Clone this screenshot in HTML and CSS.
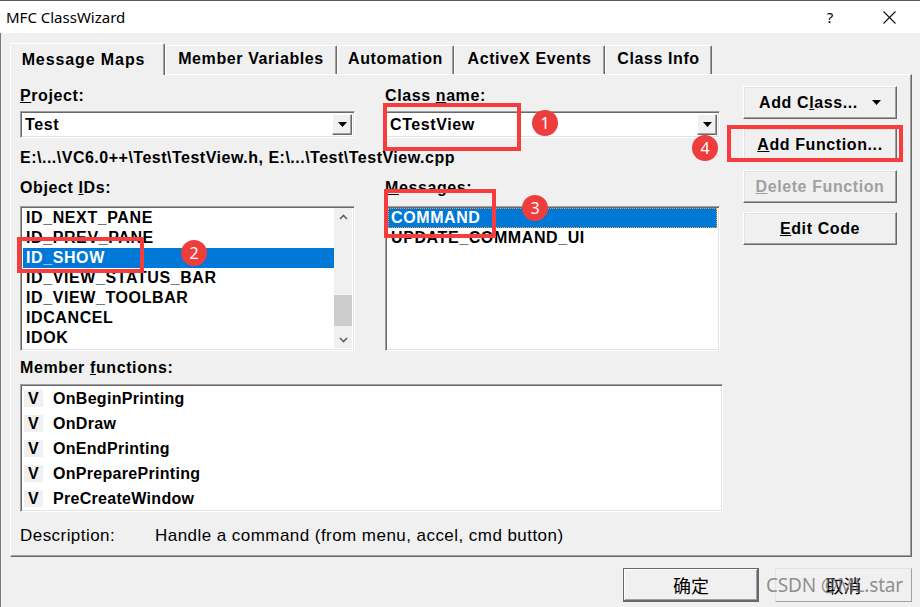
FILE: index.html
```html
<!DOCTYPE html>
<html lang="en">
<head>
    <meta charset="UTF-8">
    <title>MFC ClassWizard</title>
    <link rel="stylesheet" href="styles.css">
</head>
<body>
<div class="window">
    <div class="titlebar">
        <span class="title">MFC ClassWizard</span>
        <span class="tb-btn help">?</span>
        <span class="tb-btn close">
            <svg width="13" height="13" viewBox="0 0 13 13"><path d="M0.5 0.5 L12.5 12.5 M12.5 0.5 L0.5 12.5" stroke="#111" stroke-width="1.1" fill="none"/></svg>
        </span>
    </div>

    <div class="client">
        <div class="tabs">
            <div class="tab active tab-mm">Message Maps</div>
            <div class="tab tab-mv">Member Variables</div>
            <div class="tab tab-au">Automation</div>
            <div class="tab tab-ax">ActiveX Events</div>
            <div class="tab tab-ci">Class Info</div>
        </div>

        <div class="panel">
            <div class="main">
                <div class="pair">
                    <div class="field">
                        <div class="lbl"><u>P</u>roject:</div>
                        <div class="combo sunken">
                            <span class="combo-text">Test</span>
                            <span class="drop"><svg width="9" height="5" viewBox="0 0 9 5"><path d="M0 0 H9 L4.5 5 Z" fill="#000"/></svg></span>
                        </div>
                    </div>
                    <div class="field">
                        <div class="lbl">Class <u>n</u>ame:</div>
                        <div class="combo sunken">
                            <span class="combo-text">CTestView</span>
                            <span class="drop"><svg width="9" height="5" viewBox="0 0 9 5"><path d="M0 0 H9 L4.5 5 Z" fill="#000"/></svg></span>
                        </div>
                    </div>
                </div>

                <div class="path">E:\...\VC6.0++\Test\TestView.h, E:\...\Test\TestView.cpp</div>

                <div class="pair lists">
                    <div class="field">
                        <div class="lbl">Object <u>I</u>Ds:</div>
                        <div class="listbox sunken">
                            <div class="items">
                                <div class="item">ID_NEXT_PANE</div>
                                <div class="item">ID_PREV_PANE</div>
                                <div class="item selected">ID_SHOW</div>
                                <div class="item">ID_VIEW_STATUS_BAR</div>
                                <div class="item">ID_VIEW_TOOLBAR</div>
                                <div class="item">IDCANCEL</div>
                                <div class="item">IDOK</div>
                            </div>
                            <div class="scrollbar">
                                <span class="arrow"><svg width="9" height="6" viewBox="0 0 9 6"><path d="M1 5 L4.5 1.5 L8 5" stroke="#606060" stroke-width="1.6" fill="none"/></svg></span>
                                <span class="track"><span class="thumb"></span></span>
                                <span class="arrow"><svg width="9" height="6" viewBox="0 0 9 6"><path d="M1 1 L4.5 4.5 L8 1" stroke="#606060" stroke-width="1.6" fill="none"/></svg></span>
                            </div>
                        </div>
                    </div>
                    <div class="field">
                        <div class="lbl"><u>M</u>essages:</div>
                        <div class="listbox sunken">
                            <div class="items">
                                <div class="item selected focus">COMMAND</div>
                                <div class="item">UPDATE_COMMAND_UI</div>
                            </div>
                        </div>
                    </div>
                </div>

                <div class="lbl members-lbl">Member <u>f</u>unctions:</div>
                <div class="members sunken">
                    <div class="member"><span class="kind">V</span>OnBeginPrinting</div>
                    <div class="member"><span class="kind">V</span>OnDraw</div>
                    <div class="member"><span class="kind">V</span>OnEndPrinting</div>
                    <div class="member"><span class="kind">V</span>OnPreparePrinting</div>
                    <div class="member"><span class="kind">V</span>PreCreateWindow</div>
                </div>

                <div class="desc">
                    <span class="desc-lbl">Description:</span>
                    <span>Handle a command (from menu, accel, cmd button)</span>
                </div>
            </div>

            <div class="side">
                <div class="btn">Add C<u>l</u>ass...<svg class="caret" width="9" height="5" viewBox="0 0 9 5"><path d="M0 0 H9 L4.5 5 Z" fill="#000"/></svg></div>
                <div class="btn"><u>A</u>dd Function...</div>
                <div class="btn disabled"><u>D</u>elete Function</div>
                <div class="btn"><u>E</u>dit Code</div>
            </div>
        </div>

        <div class="footer">
            <div class="btn cjk default">确定</div>
            <div class="btn cjk plain">取消</div>
        </div>
    </div>

    <div class="mark box box-1"></div>
    <div class="mark box box-2"></div>
    <div class="mark box box-3"></div>
    <div class="mark box box-4"></div>
    <div class="mark badge badge-1">1</div>
    <div class="mark badge badge-2">2</div>
    <div class="mark badge badge-3">3</div>
    <div class="mark badge badge-4">4</div>
    <div class="watermark">CSDN @ML.star</div>
</div>
</body>
</html>
```

FILE: styles.css
```css
body {
    margin: 0;
    overflow: hidden;
    background: #f0f0f0;
}
.window {
    position: relative;
    width: 920px;
    height: 607px;
    display: flex;
    flex-direction: column;
    font-family: "Liberation Sans", Arial, sans-serif;
    color: #000;
}
.titlebar {
    height: 32px;
    border-top: 1px solid #5a5a5a;
    background: #fff;
    display: flex;
    align-items: center;
    padding-right: 8px;
}
.title {
    font-family: "Noto Sans", "Open Sans", sans-serif;
    font-size: 15px;
    margin-left: 6px;
}
.tb-btn {
    width: 46px;
    display: flex;
    justify-content: center;
    align-items: center;
}
.help {
    margin-left: auto;
    margin-right: 13px;
    font-family: "Noto Sans", sans-serif;
    font-size: 15px;
}
.close svg {
    display: block;
    margin-top: 1px;
}
.client {
    flex: 1;
    background: #f0f0f0;
    border-left: 1px solid #7a7a7a;
    padding: 9px 8px 0 9px;
}

/* tabs */
.tabs {
    display: flex;
    align-items: flex-end;
    height: 32px;
    position: relative;
    z-index: 2;
}
.tab {
    height: 29px;
    box-sizing: border-box;
    font-weight: bold;
    font-size: 16px;
    letter-spacing: 0.6px;
    display: flex;
    justify-content: center;
    align-items: center;
    padding-bottom: 2px;
    border-top: 1px solid #fff;
    border-left: 1px solid #fff;
    border-right: 1px solid #696969;
    box-shadow: inset -1px 0 #a0a0a0;
    border-top-left-radius: 2px;
    border-top-right-radius: 2px;
    background: #f0f0f0;
}
.tab.active {
    height: 32px;
    padding-bottom: 0;
    margin-bottom: -1px;
    padding-top: 1px;
    padding-right: 8px;
    letter-spacing: 0.9px;
}
.tab-mm { width: 155px; }
.tab-mv { width: 172px; }
.tab-au { width: 117px; }
.tab-ax { width: 151px; }
.tab-ci { width: 107px; }

.panel {
    height: 483px;
    box-sizing: border-box;
    border: 1px solid;
    border-color: #fff #696969 #696969 #fff;
    box-shadow: inset -1px -1px #a0a0a0;
    padding: 11px 14px 0 9px;
    display: flex;
    gap: 20px;
}
.main {
    width: 703px;
}
.pair {
    display: grid;
    grid-template-columns: 335px 335px;
    column-gap: 30px;
}
.lbl {
    height: 20px;
    line-height: 20px;
    font-size: 16px;
    font-weight: bold;
    letter-spacing: 0.6px;
}
.sunken {
    box-sizing: border-box;
    border: 1px solid;
    border-color: #a0a0a0 #fff #fff #a0a0a0;
    box-shadow: inset 1px 1px #696969, inset -1px -1px #e3e3e3;
    background: #fff;
}
.combo {
    margin-top: 5px;
    height: 27px;
    display: flex;
    align-items: center;
    padding: 2px 2px 2px 4px;
}
.combo-text {
    flex: 1;
    font-size: 16px;
    font-weight: bold;
    letter-spacing: 0.6px;
}
.drop {
    width: 20px;
    height: 21px;
    box-sizing: border-box;
    background: #f0f0f0;
    border: 1px solid;
    border-color: #fff #696969 #696969 #fff;
    box-shadow: inset -1px -1px #a0a0a0;
    display: flex;
    justify-content: center;
    align-items: center;
}
.path {
    margin-top: 10px;
    height: 20px;
    line-height: 20px;
    font-size: 16px;
    font-weight: bold;
    letter-spacing: 0.5px;
    white-space: nowrap;
}
.lists {
    margin-top: 10px;
}
.listbox {
    margin-top: 8px;
    height: 145px;
    padding: 1px 2px 2px;
    display: flex;
}
.items {
    flex: 1;
}
.item {
    height: 20px;
    line-height: 20px;
    padding-left: 3px;
    font-size: 16px;
    font-weight: bold;
    letter-spacing: 0.6px;
    white-space: nowrap;
    box-sizing: border-box;
}
.item.selected {
    background: #0078d7;
    color: #fff;
}
.item.focus {
    border: 1px dotted #f0a040;
    line-height: 18px;
    padding-left: 2px;
}
.scrollbar {
    width: 18px;
    display: flex;
    flex-direction: column;
    background: #f0f0f0;
}
.arrow {
    height: 17px;
    display: flex;
    justify-content: center;
    align-items: center;
}
.track {
    flex: 1;
    display: flex;
    flex-direction: column;
    justify-content: flex-end;
    padding-bottom: 5px;
}
.thumb {
    display: block;
    height: 31px;
    background: #cdcdcd;
}
.members-lbl {
    margin-top: 7px;
}
.members {
    margin-top: 6px;
    height: 128px;
    padding: 1px 3px;
}
.member {
    height: 25px;
    display: flex;
    align-items: center;
    font-size: 16px;
    font-weight: bold;
    letter-spacing: 0.3px;
}
.kind {
    width: 19px;
    height: 17px;
    line-height: 17px;
    text-align: center;
    background: #f0f0f0;
    margin-right: 10px;
}
.desc {
    margin-top: 14px;
    height: 20px;
    line-height: 20px;
    font-size: 17px;
    letter-spacing: 0.45px;
    display: flex;
}
.desc-lbl {
    width: 135px;
}

/* buttons */
.side {
    width: 154px;
    display: flex;
    flex-direction: column;
    gap: 9px;
}
.btn {
    height: 33px;
    box-sizing: border-box;
    border: 1px solid;
    border-color: #fff #696969 #696969 #fff;
    box-shadow: inset -1px -1px #a0a0a0, inset 1px 1px #e3e3e3;
    background: #f0f0f0;
    display: flex;
    justify-content: center;
    align-items: center;
    font-size: 16px;
    font-weight: bold;
    letter-spacing: 0.6px;
}
.btn.disabled {
    color: #a0a0a0;
}
.caret {
    margin-left: 14px;
}
.footer {
    display: flex;
    justify-content: flex-end;
    gap: 16px;
    margin-top: 11px;
}
.btn.cjk {
    width: 136px;
    height: 34px;
    font-family: "Noto Sans CJK SC", sans-serif;
    font-weight: normal;
    font-size: 18px;
    letter-spacing: 0;
}
.btn.default {
    border-color: #696969;
    box-shadow: inset -1px -1px #696969, inset 1px 1px #fff, inset -2px -2px #a0a0a0;
}
.btn.plain {
    width: 137px;
    border-color: #e3e3e3 #a0a0a0 #a0a0a0 #e3e3e3;
    box-shadow: none;
}

/* annotations */
.mark {
    position: absolute;
    box-sizing: border-box;
}
.box {
    border: 4px solid #f63c3c;
}
.box-1 { left: 383px; top: 103px; width: 138px; height: 48px; }
.box-2 { left: 17px; top: 237px; width: 127px; height: 36px; }
.box-3 { left: 384px; top: 189px; width: 112px; height: 49px; }
.box-4 { left: 727px; top: 125px; width: 176px; height: 37px; }
.badge {
    width: 26px;
    height: 26px;
    border-radius: 50%;
    background: #ee3d3d;
    color: #fff;
    font-family: "Noto Sans", sans-serif;
    font-size: 16px;
    line-height: 26px;
    text-align: center;
}
.badge-1 { left: 532px; top: 110px; }
.badge-2 { left: 181px; top: 240px; }
.badge-3 { left: 522px; top: 195px; }
.badge-4 { left: 692px; top: 135px; }
.watermark {
    position: absolute;
    left: 766px;
    top: 572px;
    font-family: "Noto Sans", sans-serif;
    font-size: 19px;
    color: rgba(110, 110, 110, 0.75);
    letter-spacing: -0.2px;
}
```
